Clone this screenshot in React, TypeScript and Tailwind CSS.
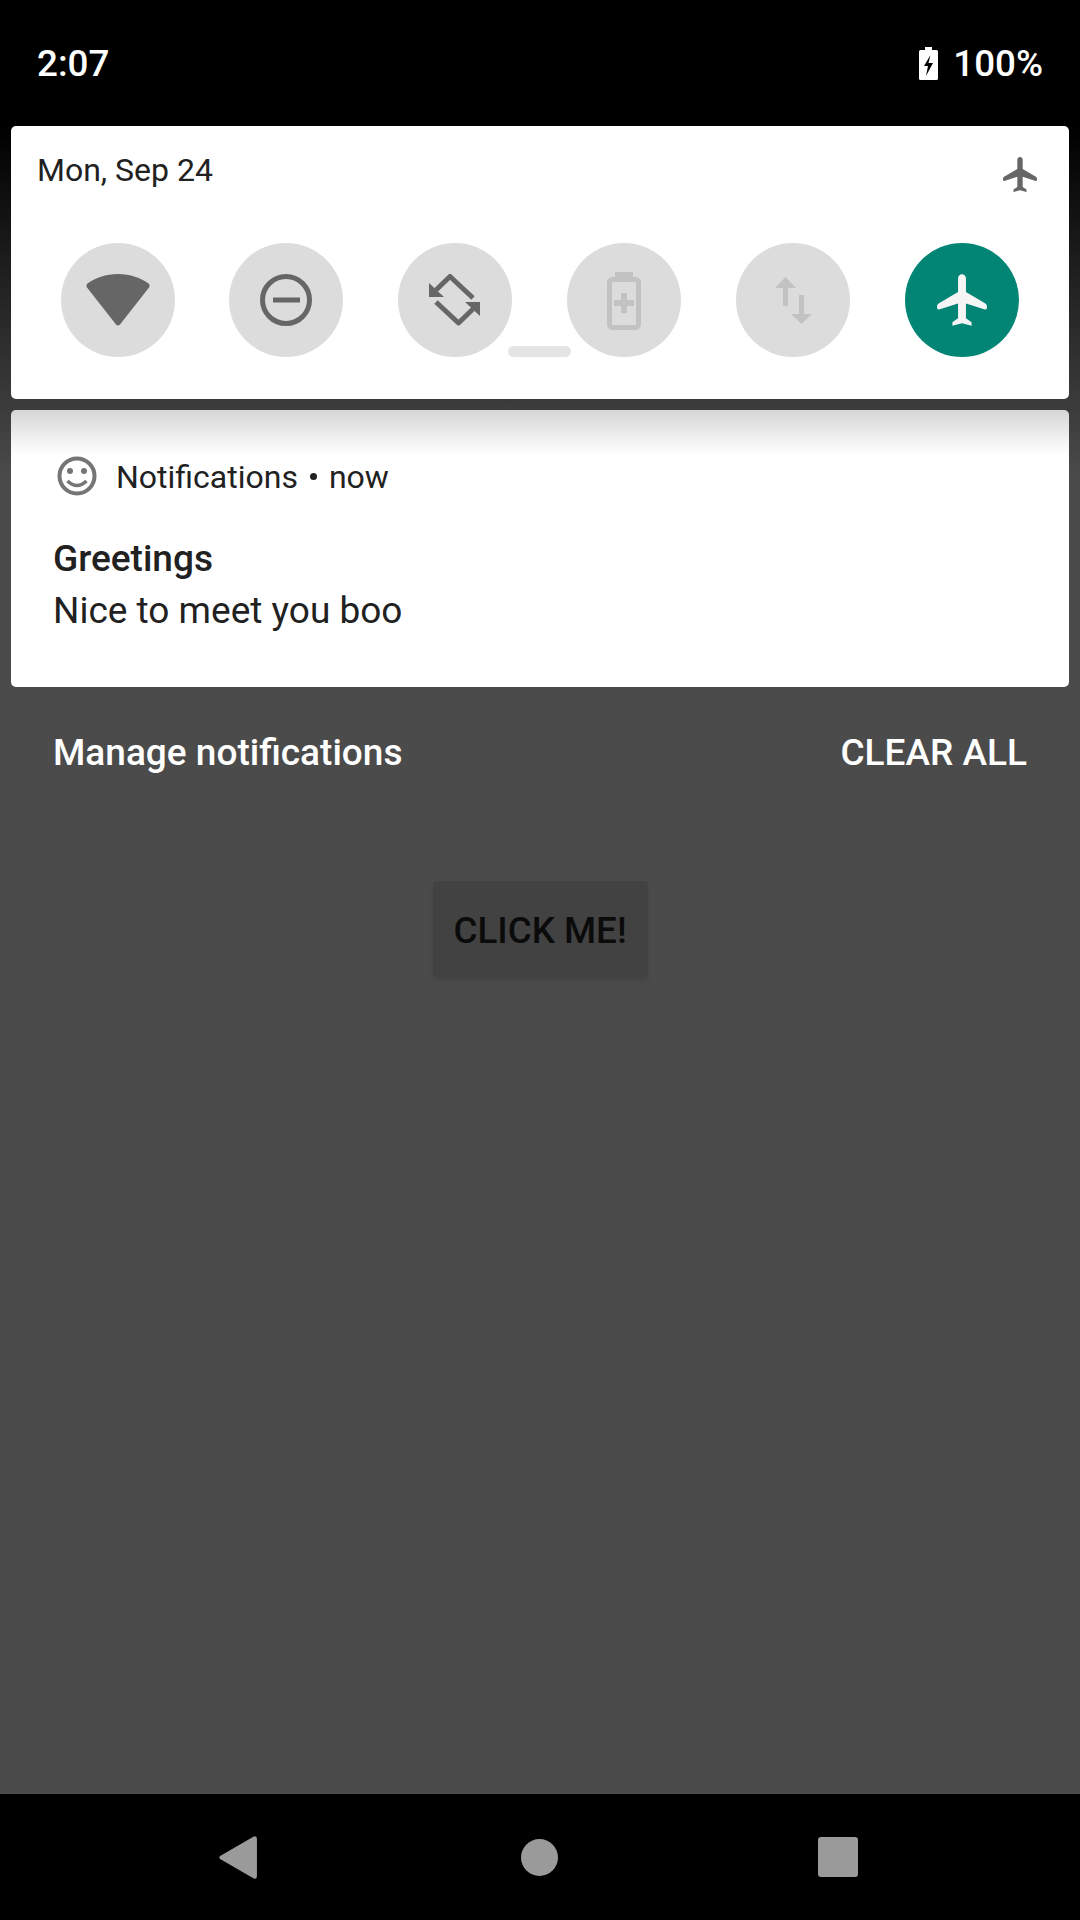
import React from 'react';

const Airplane: React.FC<{ className: string }> = ({ className }) => (
  <svg viewBox="0 0 50.6 52" className={className}>
    <path
      d="M25.300 0C27.500 0 29.300 1.800 29.300 4V18L49 29.500Q50.600 30.500 50.600 32.500V33.500Q50.600 36 48.500 35.500L29.300 29.500V44.500L35 48.500V52L25.300 49.500 15.600 52V48.500L21.300 44.500V29.500L2.100 35.500Q0 36 0 33.500V32.500Q0 30.500 1.600 29.500L21.300 18V4C21.300 1.800 23.100 0 25.300 0Z"
      fill="currentColor"
    />
  </svg>
);

const Tile: React.FC<{ active?: boolean; className?: string; children: React.ReactNode }> = ({
  active,
  className = '',
  children,
}) => (
  <div
    className={`flex h-[114px] w-[114px] items-center justify-center rounded-full ${
      active ? 'bg-[#038575]' : 'bg-[#dcdcdc]'
    } ${className}`}
  >
    {children}
  </div>
);

export default function App() {
  return (
    <div
      className="flex h-[1920px] w-[1080px] flex-col overflow-hidden bg-[linear-gradient(to_bottom,#000_126px,#4b4b4b_480px)] text-[#212121]"
      style={{ fontFamily: 'Roboto, sans-serif' }}
    >
      {/* status bar */}
      <div className="flex h-[126px] shrink-0 items-center justify-between pl-[37px] pr-[37px] pt-[2px] text-[36.75px] font-medium text-white">
        <span>2:07</span>
        <div className="flex items-center gap-[15px]">
          <svg viewBox="0 0 19 33" className="mb-[1px] h-[33px] w-[19px]">
            <path d="M6 0h7v3h4.500a1.500 1.500 0 0 1 1.500 1.500V31.500a1.500 1.500 0 0 1-1.500 1.500H1.500A1.500 1.500 0 0 1 0 31.500V4.500A1.500 1.500 0 0 1 1.500 3H6z" fill="#fff" />
            <path d="M11.500 8 5 19h4l-2 10 7-13h-4.500z" fill="#000" />
          </svg>
          <span>100%</span>
        </div>
      </div>

      {/* quick settings */}
      <div className="relative mx-[11px] h-[273px] shrink-0 rounded-[5px] bg-white">
        <div className="flex items-start justify-between pl-[26px] pr-[32px] pt-[23px]">
          <span className="text-[32px] leading-[42px]">Mon, Sep 24</span>
          <Airplane className="mt-[8px] h-[35px] w-[34px] text-[#666666]" />
        </div>
        <div className="mt-[51px] flex gap-[55px] pl-[50px]">
          <Tile className="mr-[-1px]">
            <svg viewBox="0 0 64 52" className="h-[52px] w-[64px]">
              <path d="M32 0C20 0 9 4 1.500 9.500Q-.5 11.500 1 13.500L30 50.500Q32 52.500 34 50.500L63 13.500Q64.500 11.500 62.500 9.500C55 4 44 0 32 0Z" fill="#666666" />
            </svg>
          </Tile>
          <Tile>
            <svg viewBox="0 0 52 52" className="h-[52px] w-[52px]">
              <circle cx="26" cy="26" r="23.500" fill="none" stroke="#666666" strokeWidth="5" />
              <rect x="13" y="23.500" width="27" height="5" fill="#666666" />
            </svg>
          </Tile>
          <Tile>
            <svg viewBox="0 0 52 52" className="h-[52px] w-[52px]">
              <path d="M7 16 21 2.500 44 24" fill="none" stroke="#666666" strokeWidth="5" strokeLinejoin="round" />
              <path d="M7 28 29.500 49 44 35" fill="none" stroke="#666666" strokeWidth="5" strokeLinejoin="round" />
              <path d="M0 9v14h15z" fill="#666666" />
              <path d="M51 28v14L36 28z" fill="#666666" />
            </svg>
          </Tile>
          <Tile>
            <svg viewBox="0 0 34 58" className="mt-[2px] h-[58px] w-[34px]">
              <path d="M8 0h18v5H8z" fill="#c2c2c2" />
              <rect x="2.500" y="7.500" width="29" height="48" rx="3" fill="none" stroke="#c2c2c2" strokeWidth="5" />
              <path d="M17 21v20M7 31h20" fill="none" stroke="#c2c2c2" strokeWidth="6" />
            </svg>
          </Tile>
          <Tile>
            <svg viewBox="0 0 37 47" className="h-[47px] w-[37px]">
              <path d="M10.500 0 0 11h8v18h5V11h8z" fill="#c2c2c2" />
              <path d="M26.500 47 37 37h-8V18h-5v19h-8z" fill="#c2c2c2" />
            </svg>
          </Tile>
          <Tile active>
            <Airplane className="h-[52px] w-[50px] text-[#f5f5f5]" />
          </Tile>
        </div>
        {/* drag handle sits over the tiles */}
        <div className="absolute left-[497px] top-[220px] h-[11px] w-[63px] rounded-full bg-[#e4e4e4]" />
      </div>

      {/* notification */}
      <div className="mx-[11px] mt-[11px] h-[277px] shrink-0 rounded-[5px] bg-[linear-gradient(to_bottom,#d6d6d6,#ffffff_45px)] pl-[43px]">
        <div className="flex items-center pt-[46px]">
          <svg viewBox="0 0 40 40" className="ml-[3px] h-[40px] w-[40px]">
            <circle cx="20" cy="20" r="17.500" fill="none" stroke="#757575" strokeWidth="4" />
            <circle cx="13" cy="15" r="3" fill="#757575" />
            <circle cx="27" cy="15" r="3" fill="#757575" />
            <path d="M10.500 25Q20 34 29.500 25" fill="none" stroke="#757575" strokeWidth="3.500" />
          </svg>
          <span className="ml-[19px] translate-y-[1px] text-[32px] leading-[40px]">Notifications</span>
          <span className="ml-[12px] h-[7px] w-[7px] rounded-full bg-[#212121]" />
          <span className="ml-[12px] translate-y-[1px] text-[32px] leading-[40px]">now</span>
        </div>
        <div className="ml-[-1px] mt-[37px] text-[37px] font-medium leading-[52px]">Greetings</div>
        <div className="ml-[-1px] text-[37px] leading-[52px]">Nice to meet you boo</div>
      </div>

      {/* footer actions */}
      <div className="mt-[44px] flex h-[44px] shrink-0 items-center justify-between pl-[53px] pr-[53px] text-[37px] font-medium text-white">
        <span>Manage notifications</span>
        <span>CLEAR ALL</span>
      </div>

      {/* app behind the scrim */}
      <button className="mx-auto mt-[106px] flex h-[96px] w-[215px] shrink-0 items-center justify-center rounded-[4px] bg-[#424242] pt-[3px] text-[36.75px] font-medium text-[#0b0b0b] shadow-md">
        CLICK ME!
      </button>

      {/* navigation bar */}
      <div className="mt-auto flex h-[126px] shrink-0 items-center bg-black pl-[219px]">
        <svg viewBox="0 0 37 42" className="h-[43px] w-[38px]">
          <path d="M1 19.500 33.500.8Q37 -1 37 3V39Q37 43 33.500 41.200L1 22.500Q-.5 21 1 19.500Z" fill="#9a9a9a" />
        </svg>
        <div className="ml-[264px] h-[37px] w-[37px] rounded-full bg-[#9a9a9a]" />
        <div className="ml-[260px] h-[40px] w-[40px] rounded-[3px] bg-[#9a9a9a]" />
      </div>
    </div>
  );
}
